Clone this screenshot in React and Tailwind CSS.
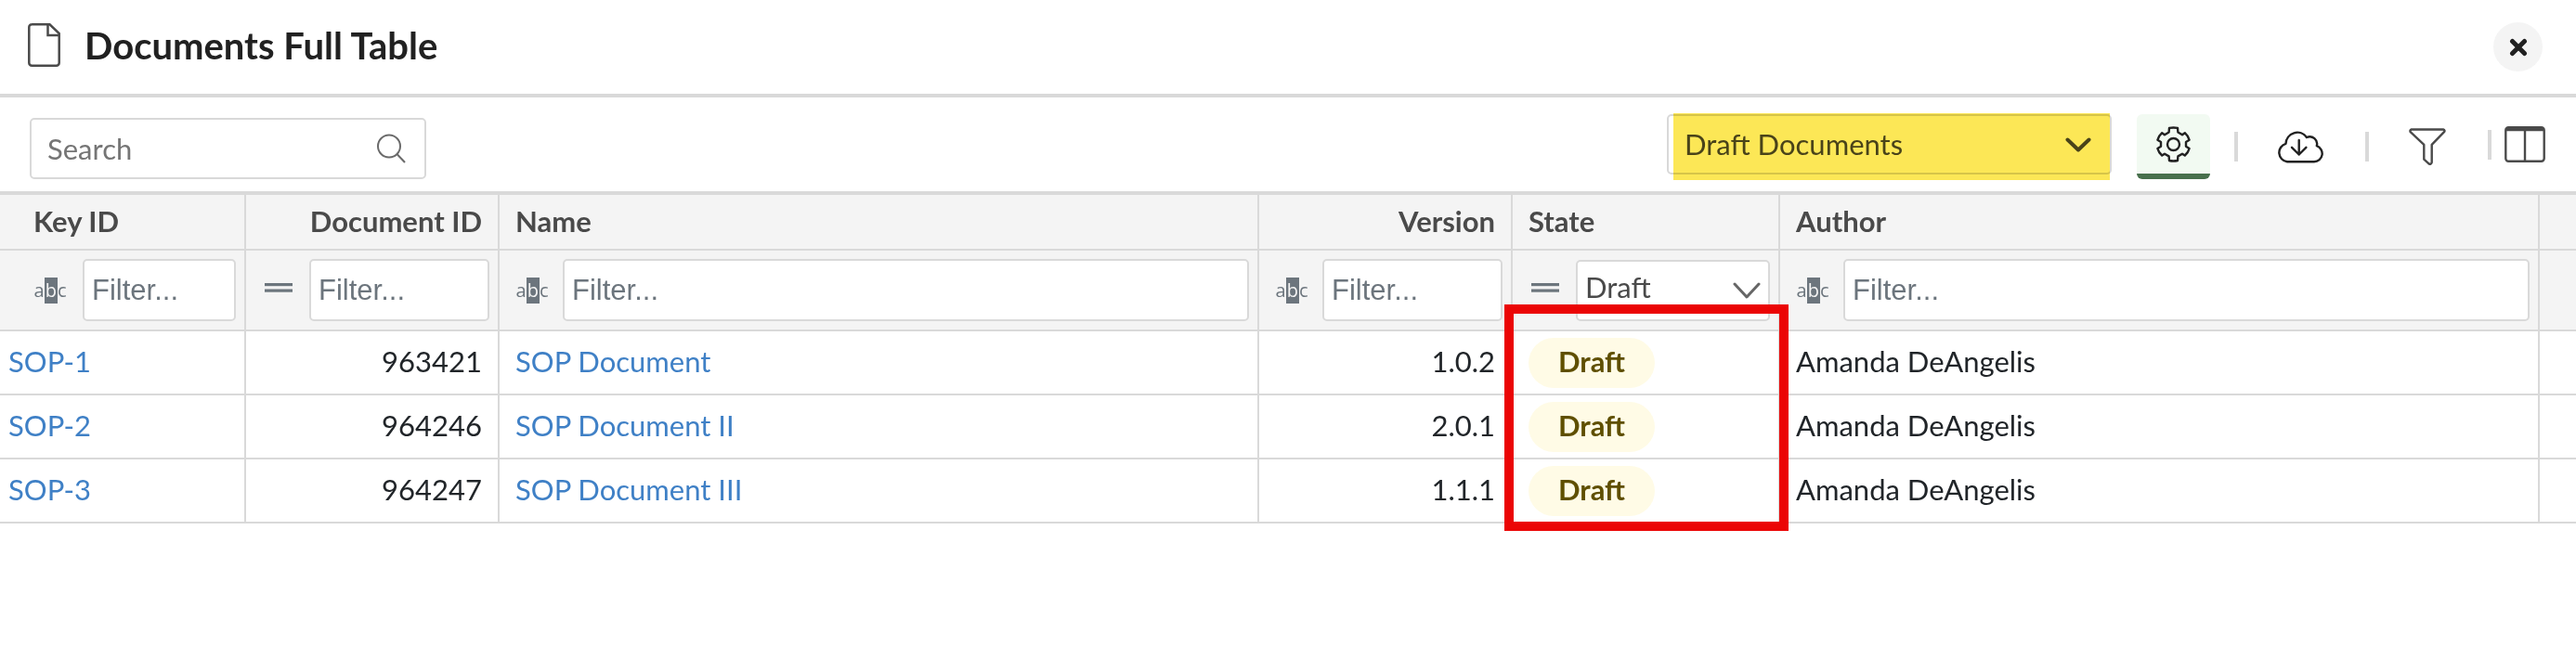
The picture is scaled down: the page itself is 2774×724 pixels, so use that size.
import React from "react";

const line = "border-[#d9d9d9]";

function AbcIcon() {
  return (
    <span aria-hidden="true" className="flex h-7 w-9 shrink-0 items-center justify-center font-['Open_Sans',sans-serif] text-xl leading-7 text-[#6c757d]">
      a<span className="bg-[#6c757d] px-px text-[#f4f4f4]">b</span>c
    </span>
  );
}

function EqualsIcon() {
  return (
    <svg aria-hidden="true" viewBox="0 0 30 28" className="h-7 w-[30px] shrink-0 fill-[#6c757d]">
      <rect y="6" width="30" height="3.200" />
      <rect y="12.500" width="30" height="3.200" />
    </svg>
  );
}

function Divider() {
  return <span className="h-8 w-1 bg-[#d9d9d9]" />;
}

function FilterCell({ label, kind = "abc", pad = "pl-[17px]", gap = "gap-[15px]" }) {
  return (
    <th className={`h-[87px] border-r-2 border-b-2 bg-[#f4f4f4] p-0 font-normal ${line}`}>
      <div className={`flex items-center ${gap} ${pad} pr-[9px]`}>
        {kind === "abc" ? <AbcIcon /> : <EqualsIcon />}
        <input
          aria-label={`Filter ${label}`}
          placeholder="Filter..."
          className="h-[67px] w-0 min-w-0 flex-1 rounded-[5px] border-2 border-[#d9d9d9] bg-white pl-2 font-['Liberation_Sans',Arial,sans-serif] text-[31px] text-[#333] placeholder:text-[#6c757d]"
        />
      </div>
    </th>
  );
}

const rows = [
  ["SOP-1", "963421", "SOP Document", "1.0.2", "Amanda DeAngelis"],
  ["SOP-2", "964246", "SOP Document II", "2.0.1", "Amanda DeAngelis"],
  ["SOP-3", "964247", "SOP Document III", "1.1.1", "Amanda DeAngelis"],
];

const head = `h-[60px] border-r-2 border-b-2 bg-[#f4f4f4] px-[17px] pt-0 pb-0.5 font-bold text-[#4a4a4a] ${line}`;
const cell = `h-[69px] border-r-2 border-b-2 px-[17px] pt-0 pb-1 ${line}`;

export default function App() {
  return (
    <main className="min-h-screen bg-white font-[Lato,sans-serif] text-[31px] leading-10 text-[#212529]">
      <header className="flex h-[105px] items-center border-b-4 border-[#d9d9d9] pr-9 pl-[30px]">
        <div className="flex flex-1 items-center gap-[26px] pb-1">
          <svg aria-hidden="true" viewBox="0 0 35 47" className="h-[47px] w-[35px] fill-none stroke-[#4a4a4a] stroke-[2.5]">
            <path d="M4.200 1.300h19.300L33.700 11v31.700a3 3 0 0 1-3 3H4.300a3 3 0 0 1-3-3V4.300a3 3 0 0 1 3-3Z" />
            <path d="M21.500 1.500V13h12" />
          </svg>
          <h1 className="text-[40px] leading-[44px] font-bold text-[#212121]">Documents Full Table</h1>
        </div>
        <button type="button" aria-label="Close" className="grid size-[53px] place-items-center rounded-full bg-[#f4f4f4]">
          <svg aria-hidden="true" viewBox="0 0 20 20" className="size-5 stroke-[#212121] stroke-[5]" strokeLinecap="round">
            <path d="M3.500 3.500l13 13M16.500 3.500l-13 13" />
          </svg>
        </button>
      </header>

      <section aria-label="Table tools" className="flex h-[105px] items-start justify-between border-b-4 border-[#d9d9d9] pt-[18px] pr-[33px] pl-8">
        <label className="mt-1 flex h-[66px] w-[427px] items-center rounded-[5px] border-2 border-[#d9d9d9] pr-5 pl-[17px]">
          <input type="search" aria-label="Search" placeholder="Search" className="min-w-0 flex-1 outline-none placeholder:text-[#757575]" />
          <svg aria-hidden="true" viewBox="0 0 32 32" className="size-8 fill-none stroke-[#6a6a6a] stroke-2">
            <circle cx="14" cy="13.500" r="12" />
            <path d="M22.500 22L31 31" />
          </svg>
        </label>

        <div className="flex items-start">
          <div className="relative flex h-[65px] w-[479px] items-center rounded-[5px] border-2 border-[#d9d9d9]">
            <select aria-label="Saved view" className="h-full w-full appearance-none bg-transparent pb-0.5 pl-[17px] text-[#4a4a4a]">
              <option>Draft Documents</option>
            </select>
            <svg aria-hidden="true" viewBox="0 0 28 16" className="pointer-events-none absolute right-5 h-4 w-7 fill-none stroke-[#4a4a4a] stroke-[4]" strokeLinecap="round" strokeLinejoin="round">
              <path d="M2.500 2.500L14 13.500L25.500 2.500" />
            </svg>
            <div className="pointer-events-none absolute -top-[3px] right-0 -bottom-2 left-[5px] bg-[#fce756] mix-blend-multiply" />
          </div>
          <button type="button" aria-label="Settings" className="ml-[27px] flex h-[70px] w-[79px] items-center justify-center rounded-md border-b-[6px] border-[#48704d] bg-[#f2faf2]">
            <svg aria-hidden="true" viewBox="0 0 37 39" className="h-[39px] w-[37px] fill-none stroke-[#212121] stroke-[2.4]" strokeLinejoin="round">
              <path d="M14 1.900Q18.500 1 23 1.900L23.400 6.500L28 9.200L30.800 7.200Q34.500 10.500 35.600 14.800L32 17V21.800L35.600 24Q34.500 28.300 30.800 31.500L28 29.700L23.400 32.400L23 37Q18.500 38 14 37L13.600 32.400L9 29.700L6.200 31.500Q2.500 28.300 1.400 24L5 21.800V17L1.400 14.800Q2.500 10.500 6.200 7.200L9 9.200L13.600 6.500Z" />
              <circle cx="18.500" cy="19.500" r="6.500" />
            </svg>
          </button>
          <div className="ml-[26px] flex h-[70px] items-center">
            <Divider />
            <button type="button" aria-label="Download" className="ml-[42px]">
              <svg aria-hidden="true" viewBox="0 0 50 36" className="h-9 w-[50px] fill-none stroke-[#212121] stroke-[2.4]" strokeLinecap="round" strokeLinejoin="round">
                <path d="M11 34.300A10 10 0 0 1 9.500 14.800A12.400 12.400 0 0 1 32 8A7.800 7.800 0 0 1 42.800 17.200A8.800 8.800 0 0 1 40 34.300Z" />
                <path d="M23.700 11v15.500M16 18.800L23.700 26.500L31.400 18.800" />
              </svg>
            </button>
            <span className="w-[45px]" />
            <Divider />
            <button type="button" aria-label="Filter" className="ml-[43px]">
              <svg aria-hidden="true" viewBox="0 0 40 40" className="size-10 fill-none stroke-[#4a4a4a] stroke-[2.4]" strokeLinejoin="round">
                <path d="M2.800 1.500H37Q39.400 2.300 38 4.200L24.700 17.800V37Q24 39.500 21.500 38.300L16.300 33.700V17.800L1.700 4.200Q.8 2.200 2.800 1.500Z" />
              </svg>
            </button>
          </div>
          <div className="ml-[45px] flex h-[65px] items-center gap-3.5">
            <Divider />
            <button type="button" aria-label="Columns">
              <svg aria-hidden="true" viewBox="0 0 44 39" className="h-[39px] w-11 fill-none stroke-[#4a4a4a] stroke-[2.4]">
                <rect x="1.300" y="1.300" width="41.400" height="36.400" rx="3" />
                <path d="M22 5v33" />
                <path d="M2 3.300h40" strokeWidth="4" />
              </svg>
            </button>
          </div>
        </div>
      </section>

      <div className="relative">
        <table className="w-full table-fixed border-separate border-spacing-0 text-left">
          <colgroup>
            <col className="w-[265px]" />
            <col className="w-[273px]" />
            <col className="w-[818px]" />
            <col className="w-[273px]" />
            <col className="w-[288px]" />
            <col />
            <col className="w-[39px]" />
          </colgroup>
          <thead>
            <tr>
              <th scope="col" className={`${head} pl-9`}>Key ID</th>
              <th scope="col" className={`${head} text-right`}>Document ID</th>
              <th scope="col" className={head}>Name</th>
              <th scope="col" className={`${head} text-right`}>Version</th>
              <th scope="col" className={head}>State</th>
              <th scope="col" className={head}>Author</th>
              <td className={`border-b-2 bg-[#f4f4f4] ${line}`} />
            </tr>
            <tr>
              <FilterCell label="Key ID" pad="pl-9" gap="gap-[17px]" />
              <FilterCell label="Document ID" kind="equals" pad="pl-5" gap="gap-[18px]" />
              <FilterCell label="Name" />
              <FilterCell label="Version" />
              <th className={`border-r-2 border-b-2 bg-[#f4f4f4] p-0 font-normal ${line}`}>
                <div className="flex items-center gap-[18px] pr-[9px] pl-5">
                  <EqualsIcon />
                  <div className="relative flex h-[66px] flex-1 items-center rounded-[5px] border-2 border-[#d9d9d9] bg-white">
                    <select aria-label="Filter State" className="h-full w-full appearance-none bg-transparent pb-2 pl-2 text-[#4a4a4a]">
                      <option>Draft</option>
                    </select>
                    <svg aria-hidden="true" viewBox="0 0 30 18" className="pointer-events-none absolute right-2 h-[18px] w-[30px] fill-none stroke-[#666] stroke-[3]" strokeLinecap="round" strokeLinejoin="round">
                      <path d="M2 2L15 16L28 2" />
                    </svg>
                  </div>
                </div>
              </th>
              <FilterCell label="Author" />
              <td className={`border-b-2 bg-[#f4f4f4] ${line}`} />
            </tr>
          </thead>
          <tbody>
            {rows.map(([key, id, name, version, author]) => (
              <tr key={key}>
                <td className={`h-[69px] border-r-2 border-b-2 px-[9px] pt-0 pb-1 ${line}`}>
                  <a href="#document" className="text-[#3f80c6]">{key}</a>
                </td>
                <td className={`${cell} text-right`}>{id}</td>
                <td className={cell}>
                  <a href="#document" className="text-[#3f80c6]">{name}</a>
                </td>
                <td className={`${cell} text-right`}>{version}</td>
                <td className={`h-[69px] border-r-2 border-b-2 px-[17px] py-0 ${line}`}>
                  <span className="flex h-[54px] w-fit items-center rounded-full bg-[#fffbe6] px-8 pb-1 font-bold text-[#5f4f00]">Draft</span>
                </td>
                <td className={cell}>{author}</td>
                <td className={`border-b-2 ${line}`} />
              </tr>
            ))}
          </tbody>
        </table>
        <div className="pointer-events-none absolute top-[118px] -bottom-2 left-[1620px] w-[306px] border-[10px] border-[#eb0505]" />
      </div>
    </main>
  );
}
